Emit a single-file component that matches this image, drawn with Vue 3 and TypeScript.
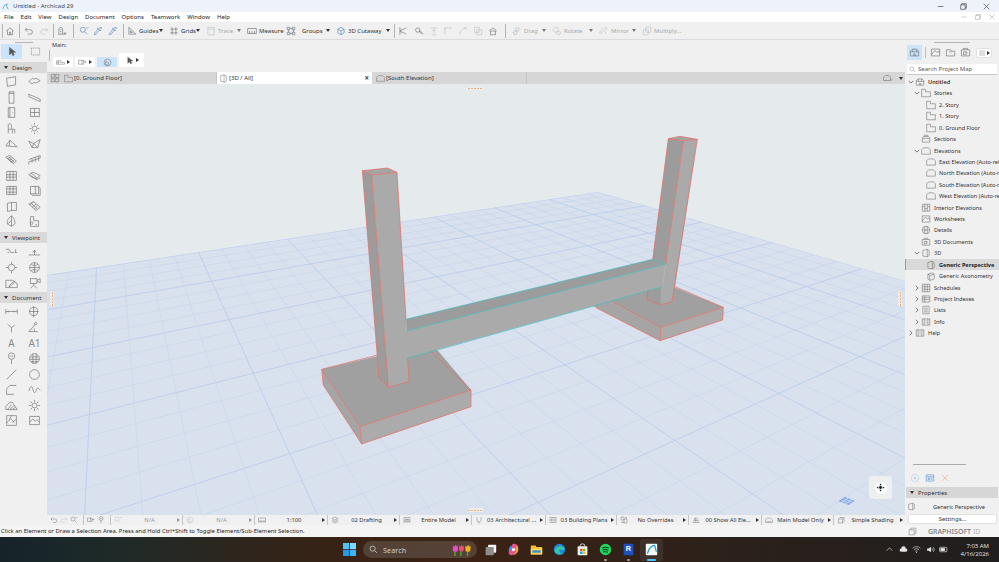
<script setup lang="ts">
import { computed } from 'vue'

type Pt = [number, number]

const icons: Record<string, string> = {
  home: 'M2 8l6-5 6 5M4 7v7h8V7M7 14v-4h2v4',
  undo: 'M5 3L2 6l3 3M2 6h8a3.5 3.5 0 0 1 0 7H6',
  redo: 'M11 3l3 3-3 3M14 6H6a3.5 3.5 0 0 0 0 7h4',
  story: 'M3 13V4l3-2 3 2v9M2 13h10M5 6h2M5 9h2M12 11h2v2h-2z',
  find: 'M6 2a4 4 0 1 0 0 8 4 4 0 0 0 0-8M9 9l4 4M11 2l2 2 2-2',
  pick: 'M13 2l1 1-3 3 1 1-1 1-4-4 1-1 1 1zM8 5l-5 6-1 3 3-1 5-6',
  guides: 'M3 2v11h11zM5.5 7.5v3h3z',
  grids: 'M5 2v12M11 2v12M2 5h12M2 11h12',
  trace: 'M3 2h10v12H3zM3 5h10',
  measure: 'M1 4h14v8H1zM4 8v4M8 8v4M12 8v4',
  groups: 'M2 2h4v4H2zM10 2h4v4h-4zM2 10h4v4H2zM10 10h4v4h-4zM6 4h4M6 12h4M4 6v4M12 6v4',
  cutaway: 'M8 2l5 3v6l-5 3-5-3V5zM3 5l5 3 5-3M8 8v6',
  split: 'M3 2v12M13 3L3 8l10 5M5 5h1M5 11h1',
  adjust: 'M6 3a3.500 3.500 0 1 0 0 7 3.500 3.500 0 0 0 0-7M9 7l5 5-1 1-5-5',
  align: 'M3 3h10M8 5v7M5 8l3-3 3 3M4 14h8',
  corner: 'M3 14V3h10M3 3v3M11 3h2',
  curve: 'M3 14c0-6 4-10 10-11M10 3h3v3',
  intersect: 'M2 2h8v8H2zM6 6h8v8H6z',
  roofup: 'M2 8l6-5 6 5M4 8v6h8V8z',
  drag: 'M6 3h5v5H6zM3 8h5v5H3zM1 11h2M5 13v2',
  rotate: 'M6 2a4 4 0 1 0 0 8 4 4 0 0 0 0-8M9 8l5 2-2 4-5-2z',
  mirror: 'M3 3l10 10M5 10a2 2 0 1 0 0 .1M13 4a2 2 0 1 0 0 .1',
  multiply: 'M6 2h8v8H6zM2 6h8v8H2z',
  pointer: 'M5 2v11l3-3 2 4 2-1-2-4h4z',
  marquee: 'M2 3h12v10H2z',
  floorplan: 'M1 5h8v3h6v3H1zM3 8h3M4 5v6',
  view: 'M1 4h9v7H1zM10 7h4M7 4v7M12 5l2 2-2 2',
  orbit: 'M8 2a6 6 0 1 0 0 12 6 6 0 0 0 0-12M5 6l5 2-1 5-5-2z',
  gridviews: 'M2 2h5v5H2zM9 2h5v5H9zM2 9h5v5H2zM9 9h5v5H9z',
  tabplan: 'M1 14V2h6v4h8v8z',
  tab3d: 'M3 3l6-1.500v13L3 13zM9 1.500l4 2v10l-4 1.500',
  elev: 'M1 13V6l3-3h8l3 3v7z',
  building: 'M1 12V7l3-3h5l3 3v5zM12 11h3',
  arch: 'M2 5h12v9H2zM2 5l2-3h8l2 3M8 5v9',
  project: 'M2 13V6l3-3h6l3 3v7zM2 7h12M6 3l-1 4M10 3l1 4M7 13v-3h2v3',
  wall: 'M2 4l11-2v10L3 14z',
  slab: 'M1 8l4-4 3 1 2-1 5 3-5 3-3-1-2 2z',
  column: 'M5 1h6v14H5zM5 3h6',
  beam: 'M1 4l14 6v3L1 7z',
  door: 'M4 2h8v12H4zM6 2v12M10 8v1',
  window: 'M3 3h11v10H3zM8 3v10M3 8h11',
  object: 'M5 2c3 0 3 2 3 4v3H4V3zM4 9v5M9 9h3v5M9 9v5',
  lamp: 'M8 5a3 3 0 1 0 0 6 3 3 0 0 0 0-6M8 1v2M8 13v2M2 8h2M12 8h2M3.500 3.500l1 1M11.500 11.500l1 1M12.500 3.500l-1 1M4.500 11.500l-1 1',
  roof: 'M1 11l5-7 9 8zM6 4l-1 7',
  shell: 'M1 5l6 3 8-5-3 10H5zM7 8l-2 5M7 8l5 5',
  stair: 'M1 5l5-2 8 7-4 3zM3 6l6 6M5 5l6 6M7 5l-4 2M9 7l-4 2M11 9l-4 2',
  rail: 'M1 8l14-5v3L1 11v3M5 7v5M9 5v6M13 4v6',
  curtain: 'M2 3h12v11H2zM6 3v11M10 3v11M2 7h12M2 10h12',
  mesh: 'M1 7l5-3 9 4-5 4zM4 5l7 6M3 9l8 4 4-2',
  gridbox: 'M2 3h12v10H2zM2 6h12M2 10h12M6 3v10M10 3v10',
  box: 'M3 3h10v9H3zM3 12l2 2h10V5l-2-2M9 3v9',
  opendoor: 'M3 4l5-1v10l-5 1zM8 3h6v10H8',
  morph: 'M1 5l6-3 8 7-5 4zM4 4l7 7M7 2L3 6M10 5l-5 4M12 7l-4 4',
  leaf: 'M8 1c-4 3-6 6-5 10l5 3 4-3c1-3-1-8-4-10zM8 1v13M3 11l5-4',
  zone: 'M3 2h4v5h6v7H3zM6 10a1.500 1.500 0 1 0 0 .1M9 12h2',
  level: 'M1 4l4 0 2 4h4M3 8h2M12 8h3M13 4v4',
  ground: 'M1 11h14M8 5v6M6 8l2-3 2 3',
  target: 'M8 4a4 4 0 1 0 0 8 4 4 0 0 0 0-8M8 1v3M8 12v3M1 8h3M12 8h3',
  globe: 'M8 2a6 6 0 1 0 0 12 6 6 0 0 0 0-12M2 8h12M8 2v12M4 4c2 2 6 2 8 0M4 12c2-2 6-2 8 0',
  draft: 'M1 13V4h8l6 4v5zM5 11l6-6 1 1-6 6H5z',
  camera: 'M3 2h8v6H3zM11 4l4-2v5l-4-2M7 8v2M3 14l4-4 4 4',
  dim: 'M1 8h14M1 5v6M15 5v6M4 7v2M11 7v2',
  dimc: 'M7 3a5 5 0 1 0 0 10 5 5 0 0 0 0-10M7 1v14M1 8h12',
  rad: 'M8 8l-5-4M8 8l4-3M8 8v6',
  angle: 'M1 13h11M1 13l8-9M7 9c1 1 1 2 1 4M11 3a1.500 1.500 0 1 0 0 .1',
  marker: 'M8 1a4 4 0 1 0 0 8 4 4 0 0 0 0-8M8 9v6M6 5h4',
  hatchg: 'M8 2a6 6 0 1 0 0 12 6 6 0 0 0 0-12M3 6h10M2 9h12M4 12h8M6 2v12M10 2v12',
  line: 'M2 14L14 2',
  circle: 'M8 2a6 6 0 1 0 0 12 6 6 0 0 0 0-12',
  poly: 'M2 14V7l4-4h8M2 14h9',
  spline: 'M1 10c2-7 4-7 5-2s3 5 4 1 3-3 5 0',
  fill: 'M1 13V9l5-5h3l6 9zM3 13l5-6M6 13l5-5M9 13l4-3',
  sun: 'M8 5a3 3 0 1 0 0 6 3 3 0 0 0 0-6M8 1v3M8 12v3M1 8h3M12 8h3M3 3l2 2M11 11l2 2M13 3l-2 2M5 11l-2 2',
  drawing: 'M2 2h12v12H2zM2 11l5-5 4 4M8 2l-3 5M14 6l-5 5',
  figure: 'M2 3h12v10H2zM2 10l4-4 3 3 2-2 3 3',
  menu: 'M2 4h12M2 8h12M2 12h12',
  search: 'M6.500 2a4.500 4.500 0 1 0 0 9 4.500 4.500 0 0 0 0-9M10 10l4 4',
  sections: 'M2 13V6l2-2h8l2 2v7zM2 7h12M5 4V2h6v2',
  interior: 'M2 2h12v11H2zM6 2v11M10 2v11M2 6h4M10 6h4M6 9h4',
  worksheet: 'M2 3h12v10H2zM2 11l5-6 3 3 2-2 2 3',
  details: 'M8 2a6 6 0 1 0 0 12 6 6 0 0 0 0-12M2 8h12M6 2v12M10 2v12',
  docs: 'M2 4h12v9H2zM5 4V2h6v2M5 7h4v4H5zM9 7l2 2',
  axo: 'M3 5l7-2 3 2v8l-7 2-3-2zM3 5l3 2v8M6 7l7-2',
  schedule: 'M2 2h12v12H2zM2 6h12M2 10h12M6 2v12M10 2v12',
  indexes: 'M2 3h12v10H2zM6 3v10M2 6h12M2 9h12',
  lists: 'M3 2h10v12H3zM5 5h6M5 8h6M5 11h6',
  info: 'M2 3h12v10H2zM5 3v10M11 3v10M7 6h2M7 9h2',
  add: 'M8 2a6 6 0 1 0 0 12 6 6 0 0 0 0-12M8 5v6M5 8h6',
  panel: 'M2 3h12v10H2zM2 6h12M5 8h2v3H5zM9 8h3M9 10h3',
  close: 'M3 3l10 10M13 3L3 13',
  stack: 'M2 5h9v9H2zM5 5V2h9v9h-3',
  pers: 'M3 4l7-2v12l-7-1zM10 2l3 2v8l-3 2',
  comp: 'M2 4h6l2 2h4v7H2zM6 7h4',
  layers: 'M2 5l6-3 6 3-6 3zM2 8l6 3 6-3M2 11l6 3 6-3',
  model: 'M2 3h12v9H2zM5 6h2v2H5zM9 6h2v2H9zM2 10h12',
  plug: 'M4 2v6a4 4 0 0 0 8 0V2M8 12v3',
  planset: 'M2 3h12v10H2zM5 6h6v4H5z',
  over: 'M2 2h6v6H2zM8 6h6v8H8zM4 10v3h4M10 3h3v3',
  shown: 'M2 13l4-9h3l5 9zM6 4l2 9M5 9h7',
  maintool: 'M1 8l4-4h6l4 4v5H1zM4 11h8',
  shade: 'M3 6h8v8H3zM3 6l3-3h8v8l-3 3M11 6l3-3',
}

const toolbar = [
  { sep: 4 }, { icon: 'home', w: 12 }, { sep: 6 }, { icon: 'undo', w: 14 }, { icon: 'redo', w: 16, off: true },
  { sep: 2 }, { icon: 'story', w: 16 }, { sep: 6 }, { icon: 'find', w: 16, blue: true }, { icon: 'pick', w: 12, blue: true },
  { icon: 'pick', w: 18, blue: true }, { sep: 2 },
  { icon: 'guides', label: 'Guides', w: 42, caret: true },
  { icon: 'grids', label: 'Grids', w: 37, caret: true },
  { icon: 'trace', label: 'Trace', w: 41, caret: true, off: true },
  { icon: 'measure', label: 'Measure', w: 39 },
  { icon: 'groups', label: 'Groups', w: 50, caret: true, gap: 6 },
  { icon: 'cutaway', label: '3D Cutaway', w: 60, caret: true, blue: true },
  { sep: 2 },
  { icon: 'split', w: 16 }, { icon: 'adjust', w: 15 }, { icon: 'align', w: 15, off: true }, { icon: 'corner', w: 14, off: true },
  { icon: 'curve', w: 16, off: true }, { icon: 'intersect', w: 14, off: true }, { icon: 'roofup', w: 16 }, { sep: 8 },
  { icon: 'drag', label: 'Drag', w: 40, caret: true, off: true },
  { icon: 'rotate', label: 'Rotate', w: 47, caret: true, off: true },
  { icon: 'mirror', label: 'Mirror', w: 43, caret: true, off: true },
  { icon: 'multiply', label: 'Multiply...', w: 50, off: true },
]

const menus = ['File', 'Edit', 'View', 'Design', 'Document', 'Options', 'Teamwork', 'Window', 'Help']

const designTools = ['wall', 'slab', 'column', 'beam', 'door', 'window', 'object', 'lamp', 'roof', 'shell', 'stair', 'rail', 'curtain', 'mesh', 'gridbox', 'box', 'opendoor', 'morph', 'leaf', 'zone']
const viewTools = ['level', 'ground', 'target', 'globe', 'draft', 'camera']
const docTools = ['dim', 'dimc', 'rad', 'angle', 'text:A', 'text:A1', 'marker', 'hatchg', 'line', 'circle', 'poly', 'spline', 'fill', 'sun', 'drawing', 'figure']

const statusSegs = [
  { w: 37, icons: ['undo', 'redo', 'find'] },
  { w: 27, icons: ['view', 'marker'] },
  { w: 72, icon: 'find', label: 'N/A', off: true },
  { w: 72, icon: 'orbit', label: 'N/A', off: true },
  { w: 73, icon: 'measure', label: '1:100' },
  { w: 72, icon: 'layers', label: '02 Drafting' },
  { w: 72, icon: 'model', label: 'Entire Model' },
  { w: 74, icon: 'plug', label: '03 Architectural ...' },
  { w: 71, icon: 'planset', label: '03 Building Plans' },
  { w: 72, icon: 'over', label: 'No Overrides' },
  { w: 73, icon: 'shown', label: '00 Show All Ele...' },
  { w: 72, icon: 'maintool', label: 'Main Model Only' },
  { w: 71, icon: 'shade', label: 'Simple Shading', last: true },
]

const tree = [
  { label: 'Untitled', d: 0, icon: 'project', open: true, strong: true },
  { label: 'Stories', d: 1, icon: 'tabplan', open: true },
  { label: '2. Story', d: 2, icon: 'tabplan' },
  { label: '1. Story', d: 2, icon: 'tabplan' },
  { label: '0. Ground Floor', d: 2, icon: 'tabplan' },
  { label: 'Sections', d: 1, icon: 'sections' },
  { label: 'Elevations', d: 1, icon: 'elev', open: true },
  { label: 'East Elevation (Auto-rebuild Model)', d: 2, icon: 'elev' },
  { label: 'North Elevation (Auto-rebuild Model)', d: 2, icon: 'elev' },
  { label: 'South Elevation (Auto-rebuild Model)', d: 2, icon: 'elev' },
  { label: 'West Elevation (Auto-rebuild Model)', d: 2, icon: 'elev' },
  { label: 'Interior Elevations', d: 1, icon: 'interior' },
  { label: 'Worksheets', d: 1, icon: 'worksheet' },
  { label: 'Details', d: 1, icon: 'details' },
  { label: '3D Documents', d: 1, icon: 'docs' },
  { label: '3D', d: 1, icon: 'pers', open: true },
  { label: 'Generic Perspective', d: 2, icon: 'pers', selected: true },
  { label: 'Generic Axonometry', d: 2, icon: 'axo' },
  { label: 'Schedules', d: 1, icon: 'schedule', closed: true },
  { label: 'Project Indexes', d: 1, icon: 'indexes', closed: true },
  { label: 'Lists', d: 1, icon: 'lists', closed: true },
  { label: 'Info', d: 1, icon: 'info', closed: true },
  { label: 'Help', d: 0, icon: 'info', closed: true },
]

// ground plane: both line families run to a vanishing point on the horizon
const apex: Pt = [598, 192]
const vpLeft: Pt = [107, 50]
const vpRight: Pt = [1538, 50]

// walk along the plane edge that leaves `along`, draw each line away from `away`
function fan(along: Pt, away: Pt, step: number) {
  const out: { x1: number; y1: number; x2: number; y2: number; major: boolean }[] = []
  for (let i = 0; 1 - step * i > 0.03; i++) {
    const k = 1 - step * i
    const x1 = along[0] + (apex[0] - along[0]) / k
    const y1 = along[1] + (apex[1] - along[1]) / k
    out.push({ x1, y1, x2: x1 + (x1 - away[0]) * 8, y2: y1 + (y1 - away[1]) * 8, major: i % 4 === 0 })
  }
  return out
}

const gridLines = computed(() => [...fan(vpLeft, vpRight, 0.021875), ...fan(vpRight, vpLeft, 0.012425)])

// model faces, measured on a 3x crop with origin 300,130
function toPage(list: number[]) {
  const out: string[] = []
  for (let i = 0; i < list.length; i += 2) out.push(`${300 + list[i] / 3},${130 + list[i + 1] / 3}`)
  return out.join(' ')
}

const faces = [
  // right foot
  { p: [880, 490, 1120, 470, 1270, 532, 1083, 592], c: '#a0a0a0' },
  { p: [880, 490, 1083, 592, 1080, 632, 880, 529], c: '#a5a5a5' },
  { p: [1083, 592, 1270, 532, 1268, 570, 1080, 632], c: '#ababab' },
  // right post lower part
  { p: [1040, 470, 1090, 470, 1082, 525, 1040, 508], c: '#9c9c9c' },
  { p: [1082, 470, 1125, 465, 1116, 515, 1082, 525], c: '#aaaaaa' },
  // right post upper part
  { p: [1105, 26, 1140, 19, 1192, 28, 1150, 33], c: '#a4a4a4' },
  { p: [1105, 26, 1150, 33, 1097, 403, 1058, 388], c: '#9c9c9c' },
  { p: [1150, 33, 1192, 28, 1125, 470, 1088, 470, 1097, 403], c: '#aaaaaa' },
  // left foot
  { p: [65, 718, 395, 640, 513, 780, 180, 890], c: '#a0a0a0' },
  { p: [65, 718, 180, 890, 185, 942, 70, 765], c: '#a5a5a5' },
  { p: [180, 890, 513, 780, 513, 830, 185, 942], c: '#ababab' },
  // beam
  { p: [318, 568, 1058, 388, 1097, 403, 320, 603], c: '#9c9c9c' },
  { p: [300, 608, 1097, 403, 1088, 470, 300, 690], c: '#aaaaaa' },
  // left post
  { p: [187, 122, 262, 114, 291, 127, 215, 135], c: '#a4a4a4' },
  { p: [187, 122, 215, 135, 265, 772, 237, 742], c: '#9c9c9c' },
  { p: [215, 135, 291, 127, 318, 568, 320, 603, 323, 685, 327, 755, 265, 772], c: '#aaaaaa' },
]

const redEdges = [
  '187,122 262,114 291,127 215,135 187,122',
  '187,122 237,742 265,772 327,755 323,685',
  '215,135 265,772',
  '291,127 318,568',
  '233,675 65,718 180,890 513,780 513,830 185,942 70,765 65,718',
  '180,890 185,942',
  '395,665 513,780',
  '1105,26 1140,19 1192,28 1150,33 1105,26',
  '1105,26 1058,388',
  '1150,33 1097,403',
  '1192,28 1116,515 1082,525 1040,508 1045,480',
  '935,515 1083,592 1270,532 1268,570 1080,632 888,533',
  '1083,592 1080,632',
  '1125,470 1270,532',
]
const cyanEdges = ['318,568 1058,388 1097,403 320,603', '323,685 1088,470']
</script>

<template>
  <div class="app">
    <header class="titlebar">
      <svg class="logo" viewBox="0 0 16 16"><path d="M2 14C4 6 8 2 14 3" /><path d="M9 4l5 10" /></svg>
      <span class="title-text">Untitled - Archicad 29</span>
      <div class="winbtns">
        <svg viewBox="0 0 16 16"><path d="M3 8h10" /></svg>
        <svg viewBox="0 0 16 16"><path d="M3 5h8v8H3zM5 5V3h8v8h-2" /></svg>
        <svg viewBox="0 0 16 16"><path d="M3 3l10 10M13 3L3 13" /></svg>
      </div>
    </header>

    <nav class="menubar">
      <span v-for="m in menus" :key="m" class="menu-item">{{ m }}</span>
      <div class="docbtns">
        <svg viewBox="0 0 16 16"><path d="M3 8h10" /></svg>
        <svg viewBox="0 0 16 16"><path d="M3 5h8v8H3zM5 5V3h8v8h-2" /></svg>
        <svg viewBox="0 0 16 16"><path d="M3 3l10 10M13 3L3 13" /></svg>
      </div>
    </nav>

    <div class="toolbar">
      <template v-for="(t, i) in toolbar" :key="i">
        <div v-if="t.sep" class="tb-sep" :style="{ width: t.sep + 'px' }"></div>
        <div v-else-if="t.label" class="tb-tool" :class="{ off: t.off, blue: t.blue }" :style="{ width: t.w + 'px' }">
          <svg class="ic" viewBox="0 0 16 16"><path :d="icons[t.icon!]" /></svg>
          <span :style="{ marginLeft: (t.gap || 2) + 'px' }">{{ t.label }}</span>
          <i v-if="t.caret" class="caret-down"></i>
        </div>
        <div v-else class="tb-icon" :class="{ off: t.off, blue: t.blue }" :style="{ width: t.w + 'px' }">
          <svg class="ic" viewBox="0 0 16 16"><path :d="icons[t.icon!]" /></svg>
        </div>
      </template>
    </div>

    <div class="body">
      <div class="left-area">
        <div class="work">
          <aside class="toolbox">
            <div class="grip"></div>
            <div class="pick-row">
              <div class="pick-btn on"><svg class="ic big" viewBox="0 0 16 16"><path class="solid" :d="icons.pointer" /></svg></div>
              <div class="pick-btn"><svg class="ic big dash" viewBox="0 0 16 16"><path :d="icons.marquee" /></svg></div>
            </div>
            <div class="group-head"><i class="caret-down"></i>Design</div>
            <div class="tool-grid">
              <div v-for="t in designTools" :key="t" class="tool"><svg class="ic tool-ic" viewBox="0 0 16 16"><path :d="icons[t]" /></svg></div>
            </div>
            <div class="group-head"><i class="caret-down"></i>Viewpoint</div>
            <div class="tool-grid">
              <div v-for="t in viewTools" :key="t" class="tool"><svg class="ic tool-ic" viewBox="0 0 16 16"><path :d="icons[t]" /></svg></div>
            </div>
            <div class="group-head tight"><i class="caret-down"></i>Document</div>
            <div class="tool-grid">
              <div v-for="t in docTools" :key="t" class="tool">
                <span v-if="t.startsWith('text:')" class="tool-text">{{ t.slice(5) }}</span>
                <svg v-else class="ic tool-ic" viewBox="0 0 16 16"><path :d="icons[t]" /></svg>
              </div>
            </div>
          </aside>

          <section class="center">
            <div class="infobox">
              <div class="info-sep"></div>
              <div class="info-main">
                <span class="info-label">Main:</span>
                <div class="info-btns">
                  <div class="mini"><svg class="ic" viewBox="0 0 16 16"><path :d="icons.floorplan" /></svg><i class="caret-right"></i></div>
                  <div class="mini"><svg class="ic" viewBox="0 0 16 16"><path :d="icons.view" /></svg><i class="caret-right"></i></div>
                  <div class="mini on"><svg class="ic" viewBox="0 0 16 16"><path :d="icons.orbit" /></svg></div>
                  <div class="mini tall"><svg class="ic" viewBox="0 0 16 16"><path class="solid" :d="icons.pointer" /></svg><i class="caret-right"></i></div>
                </div>
              </div>
            </div>

            <div class="tabs">
              <div class="tab-grid"><svg class="ic" viewBox="0 0 16 16"><path :d="icons.gridviews" /></svg></div>
              <div class="tab"><svg class="ic" viewBox="0 0 16 16"><path :d="icons.tabplan" /></svg><span>[0. Ground Floor]</span></div>
              <div class="tab active"><svg class="ic" viewBox="0 0 16 16"><path :d="icons.tab3d" /></svg><span>[3D / All]</span><b class="tab-x">×</b></div>
              <div class="tab after"><svg class="ic" viewBox="0 0 16 16"><path :d="icons.elev" /></svg><span>[South Elevation]</span></div>
              <div class="tab-rest">
                <svg class="ic" viewBox="0 0 16 16"><path :d="icons.building" /></svg>
                <i class="caret-down"></i>
              </div>
            </div>

            <div class="viewport">
              <svg class="scene" viewBox="47 84 858 431">
                <defs>
                  <clipPath id="plane"><polygon points="47,275 598,192 905,281 905,515 47,515" /></clipPath>
                </defs>
                <polygon points="47,275 598,192 905,281 905,515 47,515" fill="#d8e1ed" />
                <g clip-path="url(#plane)">
                  <line
                    v-for="(l, i) in gridLines"
                    :key="i"
                    :x1="l.x1"
                    :y1="l.y1"
                    :x2="l.x2"
                    :y2="l.y2"
                    :stroke="l.major ? '#b7caee' : '#c6d3ea'"
                    :stroke-width="l.major ? 0.8 : 0.55"
                  />
                </g>
                <polygon v-for="(f, i) in faces" :key="i" :points="toPage(f.p)" :fill="f.c" />
                <polyline v-for="(e, i) in redEdges" :key="'r' + i" :points="toPage(e.split(/[ ,]/).map(Number))" fill="none" stroke="#ea6a60" stroke-width="0.7" />
                <polyline v-for="(e, i) in cyanEdges" :key="'c' + i" :points="toPage(e.split(/[ ,]/).map(Number))" fill="none" stroke="#41bdbd" stroke-width="0.7" />
                <g fill="#7ea6f2" transform="translate(846 501) rotate(20) skewX(-35) scale(1 .55)">
                  <rect x="-5" y="-6" width="3" height="3" /><rect x="-1" y="-6" width="3" height="3" /><rect x="3" y="-6" width="3" height="3" />
                  <rect x="-5" y="-2" width="3" height="3" /><rect x="-1" y="-2" width="3" height="3" /><rect x="3" y="-2" width="3" height="3" />
                  <rect x="-5" y="2" width="3" height="3" /><rect x="-1" y="2" width="3" height="3" /><rect x="3" y="2" width="3" height="3" />
                </g>
              </svg>
              <i class="dash-h top"></i>
              <i class="dash-h bottom"></i>
              <i class="dash-v left"></i>
              <i class="dash-v right"></i>
              <div class="compass">
                <div class="compass-disc">
                  <svg viewBox="0 0 16 16"><path d="M8 1l2 3H6zM8 15l-2-3h4zM1 8l3-2v4zM15 8l-3 2V6z" /><circle cx="8" cy="8" r="2.500" /></svg>
                </div>
              </div>
            </div>

            <div class="statusbar">
              <div v-for="(s, i) in statusSegs" :key="i" class="seg" :class="{ off: s.off, last: s.last }" :style="{ width: s.w + 'px' }">
                <template v-if="s.icons">
                  <svg v-for="ic in s.icons" :key="ic" class="ic seg-ic" :class="{ faint: ic === 'redo' }" viewBox="0 0 16 16"><path :d="icons[ic]" /></svg>
                </template>
                <template v-else>
                  <svg class="ic seg-ic" viewBox="0 0 16 16"><path :d="icons[s.icon!]" /></svg>
                  <span class="seg-label">{{ s.label }}</span>
                  <i class="caret-right"></i>
                </template>
              </div>
            </div>
          </section>
        </div>
        <div class="message">Click an Element or Draw a Selection Area. Press and Hold Ctrl+Shift to Toggle Element/Sub-Element Selection.</div>
      </div>

      <aside class="navigator">
        <div class="grip wide"></div>
        <div class="nav-tabs">
          <div class="nav-tab on"><svg class="ic" viewBox="0 0 16 16"><path :d="icons.project" /></svg></div>
          <div class="nav-div"></div>
          <div class="nav-tab"><svg class="ic" viewBox="0 0 16 16"><path :d="icons.worksheet" /></svg></div>
          <div class="nav-tab"><svg class="ic" viewBox="0 0 16 16"><path :d="icons.comp" /></svg></div>
          <div class="nav-tab"><svg class="ic" viewBox="0 0 16 16"><path :d="icons.docs" /></svg></div>
          <div class="nav-menu"><svg class="ic" viewBox="0 0 16 16"><path :d="icons.menu" /></svg><i class="caret-right"></i></div>
        </div>
        <div class="nav-search">
          <svg class="ic" viewBox="0 0 16 16"><path :d="icons.search" /></svg>
          <span>Search Project Map</span>
        </div>
        <div class="tree">
          <div v-for="n in tree" :key="n.label" class="row" :class="['d' + n.d, { selected: n.selected, strong: n.strong }]">
            <span class="chev">
              <svg v-if="n.open" viewBox="0 0 8 8"><path d="M1 2.500l3 3 3-3" /></svg>
              <svg v-else-if="n.closed" viewBox="0 0 8 8"><path d="M2.500 1l3 3-3 3" /></svg>
            </span>
            <svg class="ic row-ic" viewBox="0 0 16 16"><path :d="icons[n.icon]" /></svg>
            <span class="row-label">{{ n.label }}</span>
          </div>
        </div>
        <div class="grip long"></div>
        <div class="nav-actions">
          <svg class="ic act add" viewBox="0 0 16 16"><path :d="icons.add" /></svg>
          <svg class="ic act pan" viewBox="0 0 16 16"><path :d="icons.panel" /></svg>
          <svg class="ic act del" viewBox="0 0 16 16"><path :d="icons.close" /></svg>
        </div>
        <div class="props-head"><i class="caret-down"></i>Properties</div>
        <div class="props-row">
          <svg class="ic" viewBox="0 0 16 16"><path :d="icons.pers" /></svg>
          <span>Generic Perspective</span>
        </div>
        <div class="settings">Settings...</div>
        <div class="gs-row">
          <svg class="ic" viewBox="0 0 16 16"><path :d="icons.stack" /></svg>
          <span class="gs-text">GRAPHISOFT <em>ID</em></span>
        </div>
      </aside>
    </div>

    <footer class="taskbar">
      <svg class="win" viewBox="0 0 14 14">
        <rect x="0" y="0" width="6.600" height="6.600" fill="#4cc2ff" />
        <rect x="7.400" y="0" width="6.600" height="6.600" fill="#7fd6ff" />
        <rect x="0" y="7.400" width="6.600" height="6.600" fill="#1e9de6" />
        <rect x="7.400" y="7.400" width="6.600" height="6.600" fill="#3fb5f5" />
      </svg>
      <div class="searchpill">
        <svg viewBox="0 0 16 16"><path :d="icons.search" /></svg>
        <span>Search</span>
        <svg class="tulips" viewBox="0 0 27 16">
          <path d="M4 10v6M12 10v6M21 10v6" stroke="#4fa03a" stroke-width="2" fill="none" />
          <path d="M1 2l2 1.500L5 1l2 2.500L8 2v5a3.500 3.500 0 0 1-7 0z" fill="#e04fd0" />
          <path d="M9.500 2l2 1.500L13 1l1.500 2.500L16 2v5a3.200 3.200 0 0 1-6.500 0z" fill="#ef4f6a" />
          <path d="M18 2l2 1.500L22 1l1.500 2.500L25 2v5a3.500 3.500 0 0 1-7 0z" fill="#f2b01e" />
        </svg>
      </div>
      <div class="apps">
        <div class="app-ic">
          <svg viewBox="0 0 16 16"><rect x="5" y="2" width="10" height="10" rx="1" fill="#f4f4f4" /><rect x="2" y="5" width="10" height="10" rx="1" fill="#8d8d8d" /></svg>
        </div>
        <div class="app-ic">
          <svg viewBox="0 0 16 16"><path d="M8 1c3 0 6 2 6 4l-3 5c-1 3-3 5-6 5-2 0-3-2-3-4l3-6c1-3 2-4 3-4z" fill="#e0568f" /><path d="M11 4c2 0 3 2 3 4s-2 6-6 7l3-5z" fill="#f2a33a" /><path d="M5 3C3 4 2 7 2 10l3-2z" fill="#3f8fe8" /><circle cx="8" cy="8" r="2" fill="#fff" /></svg>
        </div>
        <div class="app-ic">
          <svg viewBox="0 0 16 16"><path d="M1 3h6l1 2h7v9H1z" fill="#f3c132" /><rect x="1" y="7" width="14" height="7" fill="#fbd75b" /><rect x="3" y="9" width="10" height="3" fill="#2f8fd8" /></svg>
        </div>
        <div class="app-ic">
          <svg viewBox="0 0 16 16"><circle cx="8" cy="8" r="7" fill="#1d88d8" /><path d="M2 9c1-5 8-7 12-3 0 3-3 3-5 2-2 0-2 3 2 5-5 2-9-1-9-4z" fill="#35c6a5" /></svg>
        </div>
        <div class="app-ic">
          <svg viewBox="0 0 16 16"><rect x="2" y="4" width="12" height="11" rx="1" fill="#f2f2f2" /><path d="M5 4a3 3 0 0 1 6 0" fill="none" stroke="#f2f2f2" /><rect x="5" y="7" width="3" height="3" fill="#f25022" /><rect x="8.500" y="7" width="3" height="3" fill="#7fba00" /><rect x="5" y="10.500" width="3" height="3" fill="#00a4ef" /><rect x="8.500" y="10.500" width="3" height="3" fill="#ffb900" /></svg>
        </div>
        <div class="app-ic dot">
          <svg viewBox="0 0 16 16"><circle cx="8" cy="8" r="7" fill="#1ed760" /><path d="M4 6c3-1 6-1 8 .5M4.500 8.500c2.500-.8 5-.6 7 .5M5 11c2-.5 4-.4 6 .5" stroke="#111" stroke-width="1.100" fill="none" /></svg>
        </div>
        <div class="app-ic dot">
          <svg viewBox="0 0 16 16"><rect x="2" y="1" width="12" height="14" rx="1" fill="#1c4fc0" /><text x="8" y="10" text-anchor="middle" font-size="9" font-weight="700" fill="#fff" font-family="Liberation Sans, sans-serif">R</text></svg>
        </div>
        <div class="app-ic active">
          <svg viewBox="0 0 16 16"><rect x="1" y="1" width="14" height="14" rx="1" fill="#f6f8fa" /><path d="M3 13C5 6 8 3 12 3l2 8" fill="none" stroke="#1ba5c9" stroke-width="1.500" /></svg>
        </div>
      </div>
      <div class="tray">
        <svg viewBox="0 0 16 16"><path d="M3 10l5-5 5 5" /></svg>
        <svg viewBox="0 0 16 16"><path class="filled" d="M4 12a3 3 0 0 1 0-6 4 4 0 0 1 8 0 3 3 0 0 1 0 6z" /></svg>
        <svg viewBox="0 0 16 16"><path d="M1 6c4-4 10-4 14 0M3.500 8.500c3-2.500 6-2.500 9 0M6 11c1.500-1 2.500-1 4 0" /><circle class="filled" cx="8" cy="13" r="1" /></svg>
        <svg viewBox="0 0 16 16"><path class="filled" d="M2 6h3l4-3v10l-4-3H2z" /><path d="M11 6c1 1 1 3 0 4M13 4c2 2 2 6 0 8" /></svg>
        <svg viewBox="0 0 16 16"><rect x="1" y="4" width="13" height="8" rx="1.500" /><rect class="filled" x="2.500" y="5.500" width="8" height="5" /></svg>
        <div class="clock"><span>7:03 AM</span><span>4/16/2026</span></div>
      </div>
    </footer>
  </div>
</template>

<style scoped>
.app {
  width: 999px;
  height: 562px;
  display: flex;
  flex-direction: column;
  overflow: hidden;
  font-family: "Noto Sans", "Open Sans", sans-serif;
  font-size: 6px;
  color: #333;
  background: #f0f0f0;
}
.ic { width: 10px; height: 10px; flex: none; fill: none; stroke: #666; stroke-width: .85; }
.ic .solid { fill: #555; }
.caret-down { width: 0; height: 0; flex: none; border-left: 2.5px solid transparent; border-right: 2.5px solid transparent; border-top: 3px solid #333; }
.caret-right { width: 0; height: 0; flex: none; border-top: 2.5px solid transparent; border-bottom: 2.5px solid transparent; border-left: 3px solid #333; }

.titlebar { height: 12px; flex: none; display: flex; align-items: center; background: #eef2fb; padding-left: 2px; }
.logo { width: 7px; height: 7px; fill: none; stroke: #1c8fb5; stroke-width: 1.5; }
.title-text { margin-left: 4px; color: #444; }
.winbtns { margin-left: auto; display: flex; gap: 14px; padding-right: 8px; }
.winbtns svg { width: 9px; height: 9px; fill: none; stroke: #222; stroke-width: 1; }

.menubar { height: 10px; flex: none; display: flex; align-items: center; background: #fff; padding-left: 4px; gap: 7px; position: relative; }
.menu-item { color: #222; }
.docbtns { margin-left: auto; display: flex; gap: 6px; padding-right: 3px; }
.docbtns svg { width: 8px; height: 8px; fill: none; stroke: #a0a0a0; stroke-width: 1; }

.toolbar { height: 18px; flex: none; display: flex; align-items: center; background: #f0f0f0; border-bottom: 1px solid #dcdcdc; box-sizing: border-box; }
.tb-sep { height: 14px; flex: none; display: flex; justify-content: center; background: linear-gradient(#b4b4b4, #b4b4b4) center / 1px 100% no-repeat; }
.tb-icon { display: flex; justify-content: center; align-items: center; flex: none; }
.tb-tool { display: flex; align-items: center; flex: none; padding-left: 3px; padding-right: 3px; box-sizing: border-box; white-space: nowrap; }
.tb-tool .caret-down { margin-left: auto; }
.tb-icon .ic, .tb-tool .ic { stroke: #4d5a66; }
.blue .ic { stroke: #2f6fb8; }
.off { color: #a8a8a8; }
.off .ic { stroke: #b4b8bc; }
.off .caret-down { border-top-color: #777; }

.body { flex: 1; display: flex; min-height: 0; }
.left-area { flex: 1; display: flex; flex-direction: column; min-width: 0; }
.work { flex: 1; display: flex; min-height: 0; }

.toolbox { width: 47px; flex: none; box-sizing: border-box; display: flex; flex-direction: column; background: #f0f0f0; }
.grip { height: 1px; width: 18px; margin: 2px auto 0; background: #b5b5b5; flex: none; }
.pick-row { display: flex; height: 16px; padding: 1px 1px 0; gap: 3px; box-sizing: border-box; flex: none; }
.pick-btn { width: 21px; height: 15px; display: flex; align-items: center; justify-content: center; border-radius: 1px; }
.pick-btn.on { background: #cbe4f9; }
.big { width: 11px; height: 11px; }
.dash path { stroke-dasharray: 1.5 1; }
.group-head { height: 11px; margin-top: 3px; display: flex; align-items: center; gap: 4px; padding-left: 4px; background: #d9d9d9; font-size: 6px; color: #333; flex: none; }
.group-head.tight { margin-top: 1px; }
.tool-grid { display: grid; grid-template-columns: 23px 23px; grid-auto-rows: 15.55px; padding-top: 1px; flex: none; }
.tool { display: flex; align-items: center; justify-content: center; }
.tool-ic { width: 13px; height: 13px; stroke: #6e6e6e; stroke-width: .8; }
.tool-text { font-size: 10px; color: #8a8a8a; line-height: 1; }

.center { flex: 1; display: flex; flex-direction: column; min-width: 0; }
.infobox { height: 32px; flex: none; display: flex; background: #f0f0f0; padding-left: 2px; position: relative; }
.info-sep { width: 1px; height: 11px; background: #b5b5b5; margin-top: 10px; }
.info-main { margin-left: 2px; display: flex; flex-direction: column; }
.info-label { margin-top: 2px; font-size: 5.5px; line-height: 7px; }
.info-btns { display: flex; align-items: flex-end; margin-top: 4px; margin-left: 1px; gap: 2px; }
.mini { height: 10px; width: 20px; box-sizing: border-box; display: flex; align-items: center; justify-content: center; gap: 2px; background: #fff; border-radius: 1px; }
.mini.on { background: #cbe4f9; }
.mini.tall { height: 14px; width: 25px; }
.mini .ic { width: 9px; height: 9px; }

.tabs { height: 12px; flex: none; display: flex; background: #d6d6d6; }
.tab-grid { width: 15px; display: flex; align-items: center; justify-content: center; }
.tab { width: 155px; display: flex; align-items: center; gap: 1px; padding-left: 2px; box-sizing: border-box; color: #333; border-right: 1px solid #c6c6c6; }
.tab .ic { width: 9px; height: 9px; }
.tab.active { background: #fff; position: relative; border-right: 0; }
.tab.after { padding-left: 4px; }
.tab-x { margin-left: auto; margin-right: 3px; font-size: 8px; line-height: 1; color: #444; }
.tab-rest { flex: 1; display: flex; align-items: center; justify-content: flex-end; gap: 5px; padding-right: 2px; }
.tab-rest .ic { width: 12px; height: 10px; }

.viewport { flex: 1; position: relative; min-height: 0; background: #e5eaed; overflow: hidden; }
.scene { display: block; width: 858px; height: 431px; }
.dash-h { position: absolute; width: 15px; height: 4px; left: 421px; background: repeating-linear-gradient(90deg, #f0b27a 0 2px, transparent 2px 3px) center / 100% 1px no-repeat, #ececec; }
.dash-h.top { top: 2px; }
.dash-h.bottom { bottom: 3px; }
.dash-v { position: absolute; width: 4px; height: 15px; top: 207px; background: repeating-linear-gradient(0deg, #f0b27a 0 2px, transparent 2px 3px) center / 1px 100% no-repeat, #ececec; }
.dash-v.left { left: 3px; }
.dash-v.right { right: 3px; }
.compass { position: absolute; left: 822px; top: 392px; width: 23px; height: 23px; border-radius: 3px; background: #eeeff1; display: flex; align-items: center; justify-content: center; }
.compass-disc { width: 12px; height: 12px; border-radius: 50%; background: #fff; display: flex; align-items: center; justify-content: center; }
.compass svg { width: 9px; height: 9px; fill: #111; }

.statusbar { height: 10px; flex: none; display: flex; background: #f0f0f0; }
.seg { flex: none; display: flex; align-items: center; box-sizing: border-box; padding: 0 2px 0 3px; gap: 2px; border-right: 1px solid #c4c4c4; }
.seg.last { border-right: 0; }
.seg-ic { width: 8px; height: 8px; }
.seg-ic.faint { stroke: #bdbdbd; }
.seg-label { flex: 1; text-align: center; white-space: nowrap; overflow: hidden; font-size: 5.8px; }
.seg.off .seg-label { color: #999; }
.seg.off .caret-right { border-left-color: #999; }

.message { height: 12px; flex: none; display: flex; align-items: center; padding-left: 1px; background: #f4f4f4; white-space: nowrap; color: #222; font-size: 5.9px; }

.navigator { width: 94px; flex: none; display: flex; flex-direction: column; background: #f0f0f0; box-sizing: border-box; }
.grip.wide { width: 36px; }
.nav-tabs { height: 15px; margin-top: 2px; display: flex; align-items: center; padding-left: 2px; flex: none; }
.nav-tab { width: 15px; height: 15px; display: flex; align-items: center; justify-content: center; border-radius: 1px; flex: none; }
.nav-tab.on { background: #cbe4f9; }
.nav-div { width: 1px; height: 11px; margin: 0 2px 0 3px; background: #bbb; flex: none; }
.nav-tab .ic { width: 11px; height: 11px; }
.nav-menu { margin-left: 3px; width: 16px; height: 10px; border-radius: 2px; background: #fff; display: flex; align-items: center; justify-content: center; gap: 1px; flex: none; border: 1px solid #e0e0e0; box-sizing: border-box; }
.nav-menu .ic { width: 8px; height: 8px; }
.nav-search { height: 11px; margin: 4px 2px 0; background: #fff; border-bottom: 1px solid #c9c9c9; display: flex; align-items: center; gap: 2px; padding-left: 2px; color: #555; flex: none; box-sizing: border-box; }
.nav-search .ic { width: 7px; height: 7px; }

.tree { margin-top: 1.300px; flex: none; }
.row { height: 11.430px; display: flex; align-items: center; white-space: nowrap; overflow: hidden; }
.row.d0 { padding-left: 3px; }
.row.d1 { padding-left: 9px; }
.row.d2 { padding-left: 14px; }
.chev { width: 6px; height: 6px; flex: none; display: flex; }
.chev svg { width: 6px; height: 6px; fill: none; stroke: #555; stroke-width: 1; }
.row-ic { margin-left: 1px; width: 10px; height: 10px; }
.row-label { margin-left: 3px; font-size: 5.6px; color: #333; }
.row.strong .row-label { font-weight: 600; }
.row.selected { background: #d9d9d9; border-left: 1px solid #999; box-sizing: border-box; padding-left: 13px; }
.row.selected .row-label { font-weight: 700; color: #222; }
.grip.long { width: 53px; margin: 125px 0 0 8px; background: #aaa; }
.nav-actions { height: 15px; margin-top: 5px; display: flex; align-items: center; padding-left: 5px; gap: 5px; flex: none; }
.act { width: 10px; height: 10px; }
.act.add { stroke: #a9c5ec; }
.act.pan { stroke: #3a7fd0; }
.act.del { stroke: #ef9a8a; }
.props-head { height: 11px; margin: 2px 1px 0; display: flex; align-items: center; gap: 4px; padding-left: 4px; background: #d6d6d6; flex: none; }
.props-row { height: 15px; margin-top: 1px; display: flex; align-items: center; padding-left: 2px; flex: none; }
.props-row .ic { width: 9px; height: 9px; }
.props-row span { flex: 1; text-align: center; padding-left: 3px; white-space: nowrap; font-size: 5.6px; }
.settings { height: 10px; margin: 0 2px 0 3px; border-radius: 2px; background: #fff; border: 1px solid #e2e2e2; box-sizing: border-box; display: flex; align-items: center; justify-content: center; flex: none; }
.gs-row { height: 13px; margin-top: 1px; display: flex; align-items: center; padding-left: 3px; background: #f4f4f4; flex: none; }
.gs-row .ic { width: 9px; height: 9px; }
.gs-text { margin-left: 11px; font-size: 7px; color: #777; font-weight: 500; white-space: nowrap; }
.gs-text em { font-style: normal; color: #bbb; }

.taskbar { height: 25px; flex: none; display: flex; align-items: center; padding-left: 343px; box-sizing: border-box; background: linear-gradient(90deg, #16242a 0, #1f2a28 12%, #372316 32%, #3b2214 48%, #2c211b 72%, #201e1e 100%); }
.win { width: 13px; height: 13px; flex: none; }
.searchpill { width: 114px; height: 17px; margin-left: 7px; flex: none; border-radius: 9px; background: rgba(255, 255, 255, .14); display: flex; align-items: center; padding-left: 6px; box-sizing: border-box; color: #d6d3d0; font-size: 7.400px; font-family: "Open Sans", sans-serif; }
.searchpill > svg:first-child { width: 9px; height: 9px; fill: none; stroke: #ddd; stroke-width: 1.300; flex: none; }
.searchpill span { margin-left: 5px; }
.tulips { width: 20px; height: 14px; margin-left: auto; margin-right: 5px; }
.apps { display: flex; margin-left: 1.500px; }
.app-ic { width: 23px; height: 22px; display: flex; align-items: center; justify-content: center; position: relative; flex: none; }
.app-ic svg { width: 13px; height: 13px; }
.app-ic.dot::after { content: ""; position: absolute; bottom: 0; left: 10px; width: 3px; height: 1.500px; border-radius: 1px; background: #a0a0a0; }
.app-ic.active { background: rgba(255, 255, 255, .07); border-radius: 2px; }
.app-ic.active::after { content: ""; position: absolute; bottom: 0; left: 7px; width: 9px; height: 1.500px; border-radius: 1px; background: #4cc2ff; }
.tray { margin-left: auto; display: flex; align-items: center; gap: 4.500px; padding-right: 10px; }
.tray svg { width: 9px; height: 9px; fill: none; stroke: #e4e4e4; stroke-width: 1.200; flex: none; }
.tray .filled { fill: #e4e4e4; stroke: none; }
.clock { margin-left: 8px; display: flex; flex-direction: column; align-items: flex-end; color: #e8e8e8; font-size: 6px; line-height: 8px; font-family: "Open Sans", sans-serif; }
</style>

<style>
html, body { margin: 0; background: #000; }
</style>
